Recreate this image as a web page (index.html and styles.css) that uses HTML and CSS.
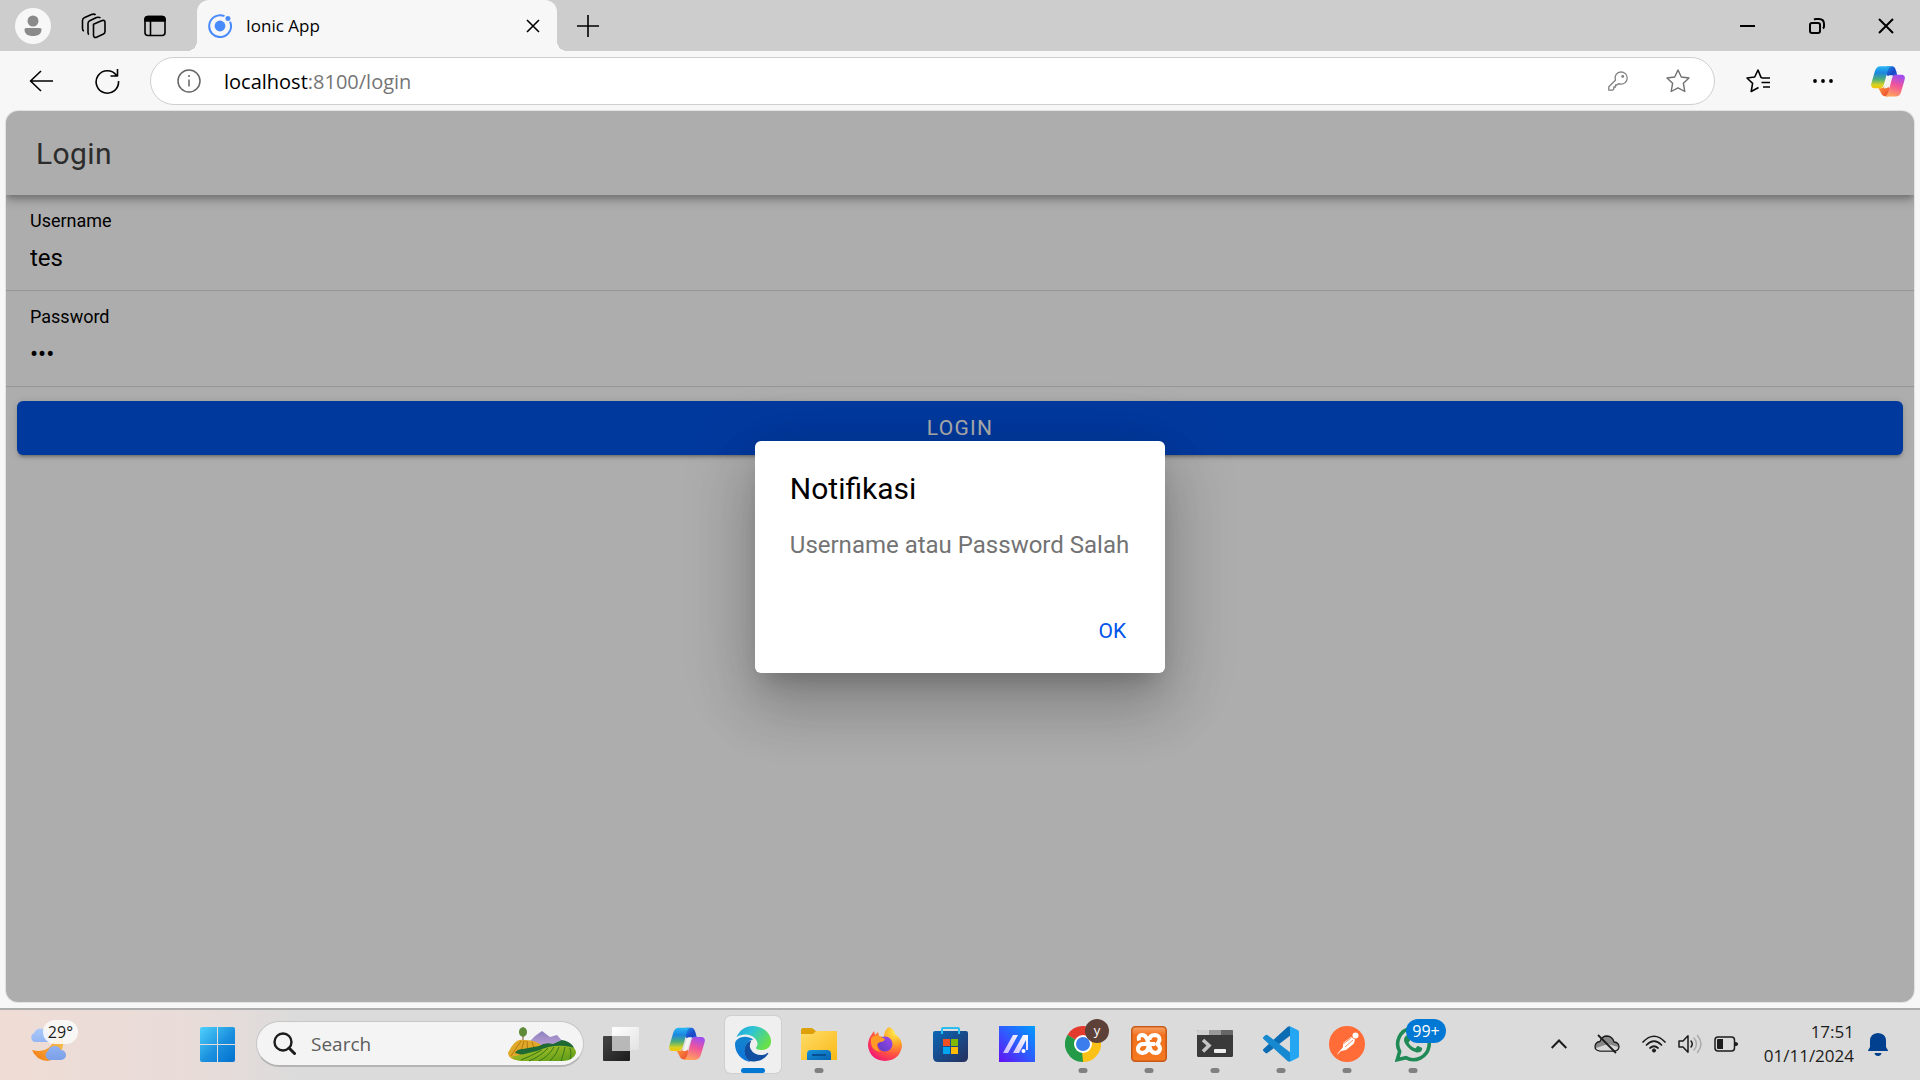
FILE: index.html
```html
<!DOCTYPE html>
<html lang="en">
<head>
<meta charset="utf-8">
<meta name="viewport" content="width=device-width, initial-scale=1">
<title>Ionic App</title>
<link rel="stylesheet" href="styles.css">
</head>
<body>
<svg class="defs" width="0" height="0" aria-hidden="true">
  <defs>
    <linearGradient id="cpA" x1="0" y1="0" x2="0" y2="1"><stop offset="0" stop-color="#2bb8f5"/><stop offset=".3" stop-color="#1a86e0"/><stop offset=".6" stop-color="#4fae78"/><stop offset=".85" stop-color="#d8d222"/><stop offset="1" stop-color="#f5c400"/></linearGradient>
    <linearGradient id="cpB" x1=".6" y1="0" x2=".3" y2="1"><stop offset="0" stop-color="#a04df0"/><stop offset=".45" stop-color="#f0559a"/><stop offset="1" stop-color="#ffa45a"/></linearGradient>
    <linearGradient id="cpC" x1="0" y1="0" x2="1" y2="1"><stop offset="0" stop-color="#1f9cf0"/><stop offset=".6" stop-color="#1a46c8"/><stop offset="1" stop-color="#2b5fe0"/></linearGradient>
    <linearGradient id="cpD" x1="0" y1="0" x2="1" y2="1"><stop offset="0" stop-color="#ffa030"/><stop offset="1" stop-color="#e8413c"/></linearGradient>
    <symbol id="copilot" viewBox="0 0 102 92">
      <path fill="url(#cpC)" d="M48 0H63C71 0 73 7 76 16L79 28C68 27 62 29 58 36L40 20Z"/>
      <path fill="url(#cpD)" d="M22 66C36 67 41 62 45 54L60 72L52 90H42C34 90 31 84 28 76Z"/>
      <path fill="url(#cpA)" d="M28 0H60C53 3 51 10 47 25L39 54C36 63 32 66 24 66H10C2 66-1 60 1 52L12 14C15 5 20 0 28 0Z"/>
      <path fill="url(#cpB)" d="M76 26H92C100 26 103 32 101 40L90 78C87 87 82 91 74 91H42C49 88 51 80 55 66L62 40C65 29 69 26 76 26Z"/>
      <path fill="#f3f3f3" d="M56 27H66Q61 31 58 42L53 60Q50 66 46 66H38Q41 61 43 54L49 34Q51 27 56 27Z"/>
    </symbol>
  </defs>
</svg>

<header class="tabstrip">
  <button class="slot" aria-label="Profile"><svg width="36" height="36" viewBox="0 0 36 36"><circle cx="18" cy="18" r="18" fill="#f7f7f7"/><circle cx="18" cy="13" r="5.5" fill="#8a8a8a"/><path d="M11 20h14a1.5 1.5 0 0 1 1.500 1.500C26.500 26 23 28 18 28S9.500 26 9.500 21.500A1.500 1.500 0 0 1 11 20Z" fill="#8a8a8a"/></svg></button>
  <button class="slot" aria-label="Workspaces"><svg width="26" height="26" viewBox="0 0 26 26" class="line"><path d="M12.500 11.200 20.500 7.800Q24 6.500 24 9.500V18.500Q24 20.200 22.500 21L16 24Q12.500 25.500 12.500 22V11.200ZM8 21.500Q7 21 7 19.500V10.500Q7 8.500 8.700 7.700L15.500 4.600Q18 3.800 19.500 5M3 18Q1.500 17.500 1.500 15.500V7.500Q1.500 5.500 3.200 4.700L10.500 1.500Q13.500.5 14.500 2"/></svg></button>
  <button class="slot" aria-label="Tab actions"><svg width="24" height="24" viewBox="0 0 24 24" class="line"><rect x="2" y="2.500" width="20" height="19" rx="3"/><path d="M2 7V5.500a3 3 0 0 1 3-3h14a3 3 0 0 1 3 3V7Z" fill="#000"/><path d="M7.500 7v14.500"/></svg></button>
  <div class="tab">
    <svg width="24" height="24" viewBox="0 0 24 24"><path d="M16.500 2.200A10.900 10.900 0 1 0 22 7.600" fill="none" stroke="#4a8bfc" stroke-width="2"/><circle cx="12" cy="12" r="5.400" fill="#4a8bfc"/><circle cx="19.900" cy="4.400" r="2.500" fill="#4a8bfc"/></svg>
    <span class="tab-title">Ionic App</span>
    <button class="tab-close" aria-label="Close tab"><svg width="14" height="14" viewBox="0 0 14 14" class="line"><path d="m1 1 12 12M13 1 1 13"/></svg></button>
  </div>
  <button class="slot" aria-label="New tab"><svg width="22" height="22" viewBox="0 0 22 22" class="line"><path d="M11 0v22M0 11h22"/></svg></button>
  <div class="window-buttons">
    <button aria-label="Minimize"><svg width="16" height="16" viewBox="0 0 16 16"><path d="M0 8h15" stroke="#000" stroke-width="2"/></svg></button>
    <button aria-label="Restore"><svg width="16" height="16" viewBox="0 0 16 16" class="line heavy"><rect x="1" y="5" width="10" height="10" rx="2"/><path d="M5 1.500Q6 1 7 1h3q5 0 5 5v2.500q0 1-1 2"/></svg></button>
    <button aria-label="Close"><svg width="16" height="16" viewBox="0 0 16 16" class="line heavy"><path d="m1 1 14 14M15 1 1 15"/></svg></button>
  </div>
</header>

<nav class="toolbar" aria-label="Browser toolbar">
  <button class="nav-slot" aria-label="Back"><svg width="24" height="22" viewBox="0 0 24 22" class="line"><path d="M12 1 1.500 11 12 21M1.500 11H24"/></svg></button>
  <button class="nav-slot" aria-label="Refresh"><svg width="26" height="26" viewBox="0 0 26 26" class="line"><path d="M22.500 7.500A11.200 11.200 0 1 0 24.500 13M23.500 1v7h-7"/></svg></button>
  <div class="address">
    <svg width="24" height="24" viewBox="0 0 24 24" fill="none" stroke="#666" stroke-width="1.500"><circle cx="12" cy="12" r="11"/><path d="M12 10.500v7M12 6v2"/></svg>
    <div class="url" role="textbox" aria-label="Address" contenteditable="true" spellcheck="false"><span class="host">localhost</span>:8100/login</div>
    <button aria-label="Saved passwords"><svg width="20" height="20" viewBox="0 0 20 20" fill="none" stroke="#808080" stroke-width="1.300" stroke-linejoin="round"><path d="M13 .8A6.200 6.200 0 0 1 13 13.200Q11.500 13.200 10.500 12.700L9 14H7.500V16H5.800V18L4.500 19.200H.8V15.800L7.400 9.200A6.200 6.200 0 0 1 13 .8Z"/><circle cx="14.700" cy="5.400" r=".8" fill="#707070"/></svg></button>
    <button aria-label="Add to favorites"><svg width="24" height="24" viewBox="0 0 24 24" fill="none" stroke="#707070" stroke-width="1.400" stroke-linejoin="round"><path d="m12 1 3.300 7 7.700 1-5.600 5.300L18.800 22.500 12 18.800 5.200 22.500 6.600 14.300 1 9l7.700-1Z"/></svg></button>
  </div>
  <button class="tool-slot" aria-label="Favorites"><svg width="24" height="24" viewBox="0 0 24 24" class="line"><path d="M16 9 15 8.400 12 1 8.700 8 1 9l5.600 5.300L5.200 22.500 12.500 18.500M16 9h8M15.500 13.500H24M17 18h7"/></svg></button>
  <button class="tool-slot" aria-label="Settings and more"><svg width="20" height="6" viewBox="0 0 20 6"><circle cx="2" cy="3" r="1.900"/><circle cx="10" cy="3" r="1.900"/><circle cx="18" cy="3" r="1.900"/></svg></button>
  <button class="tool-slot" aria-label="Copilot"><svg width="34" height="31"><use href="#copilot"/></svg></button>
</nav>

<main class="page">
  <header class="app-header"><h1>Login</h1></header>
  <form class="form">
    <div class="item"><label for="user">Username</label><input id="user" type="text" value="tes"></div>
    <div class="item"><label for="pass">Password</label><input id="pass" type="password" value="tes"></div>
    <button class="login" type="button">LOGIN</button>
  </form>
  <div class="backdrop">
    <section class="alert" role="alertdialog" aria-labelledby="alert-title" aria-describedby="alert-text">
      <h2 id="alert-title">Notifikasi</h2>
      <p id="alert-text">Username atau Password Salah</p>
      <div class="alert-actions"><button type="button">OK</button></div>
    </section>
  </div>
</main>

<footer class="taskbar">
  <button class="weather" aria-label="Weather">
    <svg width="38" height="36" viewBox="0 0 38 36">
      <defs><linearGradient id="moon" x1="1" y1="0" x2="0" y2="1"><stop offset="0" stop-color="#f8d060"/><stop offset="1" stop-color="#f27a10"/></linearGradient><linearGradient id="cl" x1="0" y1="0" x2="0" y2="1"><stop offset="0" stop-color="#a9c8fa"/><stop offset="1" stop-color="#7b9fe8"/></linearGradient></defs>
      <path fill="url(#moon)" d="M28 4Q36 8 34 20 30 34 18 35 7 34 3 24 20 28 25 14 27 9 28 4Z"/>
      <path fill="url(#cl)" d="M5 16a5 5 0 0 1 0-9Q8 1 14 3q5 2 5 6 4 0 4 4 0 3-4 3ZM20 34a5 5 0 0 1-1-9 7 7 0 0 1 13-1 5 5 0 0 1 0 10Z"/>
    </svg>
    <span class="temp">29°</span>
  </button>
  <button class="app" aria-label="Start"><svg width="35" height="35" viewBox="0 0 35 35"><defs><linearGradient id="win" x1="0" y1="0" x2="1" y2="1"><stop offset="0" stop-color="#4fd2fc"/><stop offset=".55" stop-color="#1a90de"/><stop offset="1" stop-color="#0370ce"/></linearGradient></defs><path fill="url(#win)" d="M2 0H17V17H0V2Q0 0 2 0ZM18 0H33Q35 0 35 2V17H18ZM0 18H17V35H2Q0 35 0 33ZM18 18H35V33Q35 35 33 35H18Z"/></svg></button>
  <div class="search">
    <svg width="23" height="23" viewBox="0 0 23 23" fill="none" stroke="#1c1c1c" stroke-width="2.400" stroke-linecap="round"><circle cx="10" cy="10" r="8.500"/><path d="m16 16 5.500 5.500" stroke-width="3"/></svg>
    <input type="text" aria-label="Search" placeholder="Search">
    <svg width="70" height="36" viewBox="0 0 70 36">
      <defs><linearGradient id="mt" x1="0" y1="0" x2="0" y2="1"><stop offset="0" stop-color="#8f80c0"/><stop offset="1" stop-color="#c4a8d8"/></linearGradient><linearGradient id="gr" x1="0" y1="0" x2="1" y2="1"><stop offset="0" stop-color="#b8c828"/><stop offset="1" stop-color="#5a9a18"/></linearGradient></defs>
      <path fill="url(#mt)" d="M18 20 28 10 35 5 43 11 50 9 58 18 62 24H20Z"/>
      <path fill="#e0a828" d="M1 27Q8 12 16 14 27 13 36 20L20 34H8Q1 32 1 27Z"/>
      <path d="m14 15-10 15M17 15l-5 17M20 15l1 14M25 16l3 9" stroke="#b87812" fill="none"/>
      <path fill="#1f6a34" d="M8 27Q10 23 16 23L32 20Q38 16 46 18L55 14Q62 15 66 20L68 25 40 28 20 30Z"/>
      <path fill="url(#gr)" d="M4 31Q18 28 30 25 48 17 64 21 69 22 69 27 67 34 56 35H14Q7 34 4 31Z"/>
      <path d="M14 34Q24 30 35 24M22 35Q34 30 41 22M32 35Q42 30 47 21M43 35Q50 28 52 21M54 35Q57 27 58 21M63 33Q65 27 63 22" stroke="#35781a" fill="none"/>
      <path stroke="#7a4a20" d="M16 6v8"/><path fill="#5f8a38" d="M16 1q4 1 4 5t-4 5q-4-1-4-5t4-5Z"/>
    </svg>
  </div>
  <button class="app" aria-label="Task view"><svg width="36" height="36" viewBox="0 0 36 36"><defs><linearGradient id="tv" x1="0" y1="0" x2="1" y2="1"><stop offset="0" stop-color="#444"/><stop offset="1" stop-color="#1c1c1c"/></linearGradient><linearGradient id="tw" x1="0" y1="0" x2="1" y2="1"><stop offset="0" stop-color="#fff"/><stop offset="1" stop-color="#e2e2e2"/></linearGradient></defs><rect y="10" width="27" height="25" rx="1" fill="url(#tv)"/><rect x="9" y="1" width="27" height="23" rx="1" fill="url(#tw)"/><rect x="9" y="10" width="18" height="15" fill="#b8b8b8"/></svg></button>
  <button class="app" aria-label="Copilot"><svg width="36" height="34"><use href="#copilot"/></svg></button>
  <button class="app active" aria-label="Microsoft Edge"><svg width="36" height="36" viewBox="0 0 24 24"><defs><linearGradient id="eg1" x1="0" y1="0" x2="1" y2=".5"><stop offset="0" stop-color="#1fa2dc"/><stop offset=".45" stop-color="#2ec4d4"/><stop offset="1" stop-color="#68e04a"/></linearGradient><linearGradient id="eg2" x1="0" y1="0" x2="0" y2="1"><stop offset="0" stop-color="#1484cc"/><stop offset="1" stop-color="#0c74dc"/></linearGradient></defs>
    <path fill="#0f4ea0" d="M21.860 17.860q.14 0 .25.12.1.13.1.25t-.11.33l-.32.46-.43.53-.44.5q-.26.25-.38.37l-.22.23q-.58.53-1.340 1.040-.76.51-1.600.91-.86.4-1.740.64t-1.670.24q-3 .5-5.300-.5Q6 20 6 16.500 6.500 11 11 9.500 9 13 10.500 15.500q2 3.800 7.100 3.900 2.300 0 4.260-1.540Z"/>
    <path fill="url(#eg2)" d="M6.360 16.590q0 1.100.27 2.150.27 1.060.78 2.030.51.96 1.240 1.770.74.82 1.660 1.400-1.470-.2-2.800-.74-1.330-.55-2.480-1.370-1.150-.83-2.080-1.900-.92-1.070-1.580-2.330T.36 14.940Q0 13.540 0 12.060q0-.81.32-1.490.31-.68.83-1.230.53-.55 1.200-.96.66-.4 1.350-.66.74-.27 1.500-.39.78-.12 1.550-.12.7 0 1.420.1.72.12 1.400.35.68.23 1.320.57.63.35 1.160.83-.35 0-.7.07-.33.07-.65.23-.63.28-1.200.74-.57.46-1.050 1.040-.48.58-.87 1.260-.38.67-.65 1.390-.27.71-.42 1.440-.15.72-.15 1.380Z"/>
    <path fill="url(#eg1)" d="M11.960.06q1.700 0 3.330.39 1.630.38 3.070 1.150 1.430.77 2.620 1.930 1.180 1.160 1.980 2.700.49.94.76 1.960.28 1 .28 2.080 0 .89-.23 1.700-.24.8-.69 1.480-.45.68-1.100 1.220-.64.53-1.450.88-.54.24-1.110.36-.58.13-1.160.13-.42 0-.97-.03-.54-.03-1.100-.12-.55-.1-1.050-.28-.5-.19-.84-.5-.12-.09-.23-.24-.1-.16-.1-.33 0-.15.16-.35.16-.2.35-.5.2-.28.36-.68.16-.4.16-.95 0-1.060-.4-1.960-.4-.91-1.060-1.640-.66-.74-1.520-1.280-.86-.55-1.790-.89-.84-.3-1.720-.44-.87-.14-1.760-.14-1.550 0-3.060.45T.94 7.550q.71-1.740 1.810-3.130 1.100-1.380 2.520-2.350Q6.680 1.100 8.370.58q1.700-.52 3.580-.52Z"/></svg></button>
  <button class="app open" aria-label="File Explorer"><svg width="36" height="36" viewBox="0 0 36 36"><defs><linearGradient id="fo" x1="0" y1="0" x2="1" y2="1"><stop offset="0" stop-color="#ffdc6a"/><stop offset="1" stop-color="#f9b916"/></linearGradient><linearGradient id="fb" x1="0" y1="0" x2="1" y2="1"><stop offset="0" stop-color="#1593dd"/><stop offset="1" stop-color="#0a62b0"/></linearGradient></defs><path fill="#dea00a" d="M0 4Q0 2 2 2H11L15 5H34Q36 5 36 7V14H0Z"/><path fill="url(#fo)" d="M0 8H11Q13 8 14 6L15 5H34Q36 5 36 7V34H0Z"/><path fill="url(#fb)" d="M6 34V28Q6 24 10 24H26Q30 24 30 28V34Z"/><path stroke="#064f92" stroke-width="2" d="M11 29h14"/></svg></button>
  <button class="app" aria-label="Firefox"><svg width="36" height="36" viewBox="0 0 36 36"><defs><radialGradient id="ff" cx=".8" cy=".15" r="1"><stop offset="0" stop-color="#fff04a"/><stop offset=".35" stop-color="#ffa62a"/><stop offset=".65" stop-color="#ff5540"/><stop offset="1" stop-color="#f0127a"/></radialGradient><linearGradient id="fp" x1="1" y1="0" x2="0" y2="1"><stop offset="0" stop-color="#a048f0"/><stop offset="1" stop-color="#5a3ac0"/></linearGradient></defs><path fill="url(#ff)" d="M22 1Q27 3 28 8 35 13 35 20 33 34 18 35 3 34 1 20 1 13 5 8L7 5 8 9 11 6 12 10 17 11Q17 4 22 1Z"/><circle cx="18" cy="18" r="7.500" fill="url(#fp)"/><path fill="#ff9a26" d="M4 12Q8 8 12 10L18 13Q17 16 13 16L10 18Q10 23 14 26 5 25 4 17Z"/></svg></button>
  <button class="app" aria-label="Microsoft Store"><svg width="36" height="36" viewBox="0 0 36 36"><defs><linearGradient id="st" x1="0" y1="0" x2="1" y2="1"><stop offset="0" stop-color="#0a66b8"/><stop offset="1" stop-color="#27305c"/></linearGradient></defs><path fill="url(#st)" d="M2 5H33Q35 5 35 7V31Q35 36 30 36H5Q0 36 0 31V7Q0 5 2 5Z"/><path d="M9 8V3Q9 2 10 2H25Q26 2 26 3V8" fill="none" stroke="#29bdf0" stroke-width="2"/><path fill="#f25022" d="M10 13h7v7h-7z"/><path fill="#7fba00" d="M18 13h7v7h-7z"/><path fill="#00a4ef" d="M10 21h7v7h-7z"/><path fill="#ffb900" d="M18 21h7v7h-7z"/></svg></button>
  <button class="app" aria-label="MyASUS"><svg width="36" height="36" viewBox="0 0 36 36"><defs><linearGradient id="as" x1="1" y1="0" x2="0" y2="1"><stop offset="0" stop-color="#009cff"/><stop offset=".5" stop-color="#2e5cff"/><stop offset="1" stop-color="#6410f0"/></linearGradient><linearGradient id="aw" x1="1" y1="0" x2="0" y2="1"><stop offset="0" stop-color="#fff"/><stop offset="1" stop-color="#c8b8ff"/></linearGradient></defs><path fill="url(#as)" d="M0 0h36v36H0z"/><path fill="url(#aw)" d="M14 9h5L9 27H4ZM24 9h5V24H27V14L20 27H14Z"/><circle cx="24.500" cy="25" r="2" fill="#fff"/></svg></button>
  <button class="app open" aria-label="Google Chrome"><svg width="36" height="36" viewBox="0 0 36 36"><path fill="#e33b2e" d="M18 18 2.400 9A18 18 0 0 1 33.600 9Z"/><path fill="#fbc116" d="M18 18 33.600 9A18 18 0 0 1 18 36Z"/><path fill="#229a48" d="M18 18V36A18 18 0 0 1 2.400 9Z"/><path fill="#e33b2e" d="M18 9H33.600L25 13Z"/><path fill="#229a48" d="M2.400 9 10.200 22.500 14 20Z"/><path fill="#fbc116" d="M25.800 22.500 18 36 17 25Z"/><circle cx="18" cy="18" r="9" fill="#fff"/><circle cx="18" cy="18" r="7" fill="#3b7ded"/></svg><span class="profile-badge">y</span></button>
  <button class="app open" aria-label="XAMPP"><svg width="36" height="36" viewBox="0 0 36 36"><defs><linearGradient id="xa" x1="0" y1="0" x2="0" y2="1"><stop offset="0" stop-color="#f8a468"/><stop offset=".25" stop-color="#f2701c"/><stop offset="1" stop-color="#f57a20"/></linearGradient></defs><rect x=".8" y=".8" width="34.400" height="34.400" rx="3.500" fill="url(#xa)" stroke="#c85a18" stroke-width="1.600"/><path d="M8 14.500Q6.500 9.500 11 9 14.500 9 16 13L17.500 18Q18 26.500 11.500 27 6.500 26.500 7 22 8 18 12.500 18H24M18.500 14Q18.500 9 24 9 29 9.500 28.500 14 28 16.500 26 18 29 19.500 29 23 28 27 24.500 27 20 26.500 19 22L17 15" fill="none" stroke="#fff" stroke-width="4" stroke-linejoin="round"/></svg></button>
  <button class="app open" aria-label="Terminal"><svg width="36" height="36" viewBox="0 0 36 36"><rect y="4" width="36" height="27" rx="1.500" fill="#3a3a3a"/><path fill="#d0d0d0" d="M1 4H12V9H0V5Z"/><path fill="#999" d="M12 4H24V9H12Z"/><path fill="#666" d="M24 4H35L36 5V9H24Z"/><path d="m6 14 6 5.500L6 25.500" fill="none" stroke="#c4c4c4" stroke-width="3.600"/><rect x="17" y="23" width="12" height="4" rx="1" fill="#eee"/></svg></button>
  <button class="app open" aria-label="Visual Studio Code"><svg width="36" height="36" viewBox="0 0 24 24"><path fill="#0b6cb4" d="M18 .1 16.500.5 3.900 12 .33 15.260a1 1 0 0 0 0 1.480L1.650 17.940a1 1 0 0 0 1.280.06L18 6.550Z"/><path fill="#1689d0" d="M18 23.900 16.500 23.500 3.900 12 .33 8.740a1 1 0 0 1 0-1.480L1.650 6.060A1 1 0 0 1 2.930 6L18 17.450Z"/><path fill="#25a6f2" d="M18 .1 23.150 2.590A1.500 1.500 0 0 1 24 3.940V20.060a1.500 1.500 0 0 1-.85 1.350L18 23.900Z"/></svg></button>
  <button class="app open" aria-label="Postman"><svg width="36" height="36" viewBox="0 0 36 36"><circle cx="18" cy="18" r="18" fill="#ff6c37"/><circle cx="26.500" cy="9.500" r="3" fill="#fff"/><path fill="#fff" d="m22 11 4 2.500-1 4-8 6.500-5 1-4 4 1-2 5-6v-4Z"/><path d="m14 18 8-6M16 21l8-7" stroke="#ff6c37" stroke-width=".8"/></svg></button>
  <button class="app open" aria-label="WhatsApp"><svg width="36" height="36" viewBox="0 0 24 24"><path d="M1.500 22.500 3.100 17A10.500 10.500 0 1 1 7.200 21.100Z" fill="none" stroke="#1f8a56" stroke-width="2.400"/><path fill="#1f8a56" d="M17.472 14.382c-.297-.149-1.758-.867-2.030-.967-.273-.099-.471-.148-.67.15-.197.297-.767.966-.94 1.164-.173.199-.347.223-.644.075-.297-.15-1.255-.463-2.390-1.475-.883-.788-1.480-1.761-1.653-2.059-.173-.297-.018-.458.13-.606.134-.133.298-.347.446-.52.149-.174.198-.298.298-.497.099-.198.05-.371-.025-.52-.075-.149-.669-1.612-.916-2.207-.242-.579-.487-.5-.669-.51-.173-.008-.371-.01-.57-.01-.198 0-.52.074-.792.372-.272.297-1.040 1.016-1.040 2.479 0 1.462 1.065 2.875 1.213 3.074.149.198 2.096 3.200 5.077 4.487.709.306 1.262.489 1.694.625.712.227 1.360.195 1.871.118.571-.085 1.758-.719 2.006-1.413.248-.694.248-1.289.173-1.413-.074-.124-.272-.198-.57-.347"/></svg><span class="count-badge">99+</span></button>
  <div class="tray">
    <button class="tray-slot" aria-label="Show hidden icons"><svg width="16" height="10" viewBox="0 0 16 10" fill="none" stroke="#1c1c1c" stroke-width="2"><path d="m.7 9 7.300-7.500L15.300 9"/></svg></button>
    <button class="tray-slot" aria-label="OneDrive"><svg width="26" height="20" viewBox="0 0 26 20" stroke="#1c1c1c" stroke-width="1.300"><path fill="#8a8a8a" d="M6 17Q1 16.500 1 12.500 1.500 8 6 7.500 8 2 13 2q5.500.5 7 6 5 .5 5 5-.5 4-5 4Z"/><path fill="#d8d8d8" stroke="none" d="M2 14 14 10l10 3q0 3-4 3.400H6Q2.500 16 2 14Z"/><path d="m4 1 18 18" stroke-width="1.800"/></svg></button>
    <div class="quick">
      <svg width="24" height="18" viewBox="0 0 24 18" fill="none" stroke="#1c1c1c" stroke-width="1.700" stroke-linecap="round" role="img" aria-label="Wi-Fi"><path d="M1 7Q12-4.500 23 7M4.500 10Q12 2.500 19.500 10M8 13Q12 9.500 16 13"/><circle cx="12" cy="15.500" r="1.600" fill="#1c1c1c" stroke-width="1"/></svg>
      <svg width="24" height="20" viewBox="0 0 24 20" fill="none" stroke="#1c1c1c" stroke-width="1.500" stroke-linecap="round" role="img" aria-label="Volume"><path stroke-linejoin="round" d="M1 7h4l5-5.200V18.200L5 13H1Z"/><path d="M13 7q2.500 3 0 6"/><path stroke="#aaa" d="M16 4q5 6 0 12M19.500 1.500q7 8.500 0 17"/></svg>
      <svg width="24" height="16" viewBox="0 0 24 16" role="img" aria-label="Battery"><rect x="1" y="1" width="19.500" height="14" rx="3" fill="none" stroke="#1c1c1c" stroke-width="1.500"/><path fill="#1c1c1c" d="M3 4Q3 3 4 3H9V13H4Q3 13 3 12ZM21 6q3 0 3 2t-3 2Z"/></svg>
    </div>
    <div class="clock"><time>17:51</time><time>01/11/2024</time></div>
    <button class="bell" aria-label="Notifications"><svg width="20" height="23" viewBox="0 0 20 23"><path fill="#00408f" d="M10 0q8 .5 8 8v6l2 3.500q0 .5-.5.500H.5Q0 18 0 17.500L2 14V8Q2 .5 10 0ZM6.500 20h7q-.5 3-3.500 3t-3.500-3Z"/></svg></button>
  </div>
</footer>
</body>
</html>
```
FILE: styles.css
```css
* { box-sizing: border-box; }

body {
  margin: 0;
  min-height: 100vh;
  display: flex;
  flex-direction: column;
  background: #f7f7f7;
  color: #000;
  font-family: "Open Sans", "Noto Sans", sans-serif;
}

button {
  display: flex;
  align-items: center;
  justify-content: center;
  padding: 0;
  border: 0;
  background: none;
  color: inherit;
  font: inherit;
}

svg { display: block; flex: none; }
.defs { position: absolute; }

.line {
  fill: none;
  stroke: #000;
  stroke-width: 1.6;
  stroke-linejoin: round;
}
.heavy { stroke-width: 2; }

/* Tab strip */
.tabstrip {
  display: flex;
  height: 51px;
  padding-left: 2px;
  background: #cdcdcd;
}
.slot { width: 61px; }

.tab {
  position: relative;
  display: flex;
  align-items: center;
  gap: 14px;
  width: 360px;
  margin-left: 12px;
  padding: 0 17px 0 11px;
  border-radius: 12px 12px 0 0;
  background: #f7f7f7;
}
.tab::before,
.tab::after {
  content: "";
  position: absolute;
  bottom: 0;
  width: 10px;
  height: 10px;
}
.tab::before {
  right: 100%;
  background: radial-gradient(circle at 0 0, #cdcdcd 10px, #f7f7f7 10px);
}
.tab::after {
  left: 100%;
  background: radial-gradient(circle at 100% 0, #cdcdcd 10px, #f7f7f7 10px);
}
.tab-title { flex: 1; font-size: 17px; }

.window-buttons { display: flex; margin-left: auto; }
.window-buttons button { width: 69px; }

/* Toolbar */
.toolbar {
  display: flex;
  align-items: center;
  height: 60px;
  padding-left: 8px;
}
.nav-slot { width: 66px; height: 48px; }
.tool-slot { width: 65px; height: 48px; }

.address {
  flex: 1;
  display: flex;
  align-items: center;
  gap: 38px;
  height: 48px;
  margin: 0 10px;
  padding: 0 24px 0 26px;
  border: 1px solid #cfcfcf;
  border-radius: 24px;
  background: #fff;
}
.url {
  flex: 1;
  margin-left: -15px;
  color: #757575;
  font-size: 20px;
  outline: 0;
}
.host { color: #000; }

/* App page */
.page {
  position: relative;
  flex: 1;
  margin: 0 6px 6px;
  overflow: hidden;
  border-radius: 12px;
  background: #fff;
  box-shadow: 0 0 0 1px #e2e2e2;
  font-family: Roboto, sans-serif;
}

.app-header {
  position: relative;
  display: flex;
  align-items: center;
  height: 84px;
  padding: 0 30px;
  background: #fff;
  box-shadow: 0 3px 6px -1px rgba(0, 0, 0, .2), 0 6px 8px 0 rgba(0, 0, 0, .14), 0 2px 15px 0 rgba(0, 0, 0, .12);
}
.app-header h1 {
  margin: 0;
  color: #424242;
  font-size: 30px;
  font-weight: 400;
  letter-spacing: .0125em;
}

.item {
  display: flex;
  flex-direction: column;
  height: 96px;
  padding: 15px 24px 0;
  border-bottom: 1px solid #dedede;
}
.item label { font-size: 18px; line-height: 22px; }
.item input {
  height: 36px;
  margin-top: 8px;
  padding: 0;
  border: 0;
  outline: 0;
  background: none;
  color: #000;
  font: 24px/36px Roboto, sans-serif;
}

.login {
  width: calc(100% - 22px);
  height: 54px;
  margin: 14px 11px;
  border-radius: 6px;
  background: #0054e9;
  color: #fff;
  box-shadow: 0 4px 2px -3px rgba(0, 0, 0, .2), 0 3px 3px 0 rgba(0, 0, 0, .14), 0 1px 8px 0 rgba(0, 0, 0, .12);
  font-size: 21px;
  letter-spacing: .06em;
}

.backdrop {
  position: absolute;
  inset: 0;
  display: flex;
  align-items: center;
  justify-content: center;
  background: rgba(0, 0, 0, .32);
}

.alert {
  padding: 30px 12px 15px 35px;
  border-radius: 6px;
  background: #fff;
  box-shadow: 0 16px 22px -10px rgba(0, 0, 0, .2), 0 36px 57px 4px rgba(0, 0, 0, .14), 0 14px 69px 12px rgba(0, 0, 0, .12);
}
.alert h2 {
  margin: 0;
  font-size: 30px;
  font-weight: 400;
  line-height: 35px;
}
.alert p {
  margin: 24px 24px 44px 0;
  color: #737373;
  font-size: 24px;
  line-height: 30px;
}
.alert-actions { display: flex; justify-content: flex-end; }
.alert-actions button {
  height: 54px;
  padding: 0 27px;
  color: #0054e9;
  font-size: 21px;
}

/* Taskbar */
.taskbar {
  display: flex;
  align-items: center;
  height: 72px;
  padding-bottom: 2px;
  border-top: 2px solid #adadad;
  background: linear-gradient(90deg, #efdcd5, #e8dcd9 200px, #dbdbdb 300px);
}

.weather {
  position: relative;
  width: 54px;
  height: 44px;
  margin: 0 106px 0 24px;
  justify-content: flex-start;
  padding-left: 5px;
}
.temp {
  position: absolute;
  top: -2px;
  right: 0;
  padding: 0 5px;
  border-radius: 12px;
  background: rgba(250, 250, 250, .88);
  color: #1c1c1c;
  font-size: 16px;
  line-height: 24px;
}

.app {
  position: relative;
  width: 66px;
  height: 68px;
}
.app svg { position: relative; }

.search {
  display: flex;
  align-items: center;
  width: 328px;
  height: 46px;
  margin: 0 4px 0 6px;
  padding: 0 6px 0 16px;
  border: 1px solid #c6c6c6;
  border-bottom: 2px solid #b4b4b4;
  border-radius: 23px;
  background: #f4f4f4;
}
.search input {
  flex: 1;
  min-width: 0;
  margin-left: 15px;
  padding: 0;
  border: 0;
  outline: 0;
  background: none;
  font: 19px "Open Sans", sans-serif;
}
.search input::placeholder { color: #5c5c5c; }

.open::after,
.active::after {
  content: "";
  position: absolute;
  bottom: 5px;
  left: 50%;
  translate: -50%;
  width: 9px;
  height: 5px;
  border-radius: 3px;
  background: #808080;
}
.active::after { width: 24px; background: #0078d4; }
.active::before {
  content: "";
  position: absolute;
  inset: 6px 5px 5px;
  border-radius: 6px;
  background: #efefef;
  box-shadow: 0 0 0 1px #cfcfcf;
}

.profile-badge,
.count-badge {
  position: absolute;
  top: 9px;
  height: 24px;
  border-radius: 12px;
  color: #fff;
  line-height: 24px;
  text-align: center;
}
.profile-badge {
  left: 35px;
  width: 24px;
  background: #5d4037;
  font-size: 13px;
  line-height: 22px;
}
.count-badge {
  left: 26px;
  width: 40px;
  background: #0078d4;
  font-size: 16px;
}

.tray {
  display: flex;
  align-items: center;
  margin-left: auto;
  padding-right: 32px;
  color: #1c1c1c;
}
.tray-slot { width: 48px; height: 48px; }
.quick { display: flex; align-items: center; gap: 12px; padding: 0 26px 0 11px; }
.clock {
  display: flex;
  flex-direction: column;
  align-items: flex-end;
  font-size: 17px;
  line-height: 24px;
}
.bell { margin-left: 14px; }
```
